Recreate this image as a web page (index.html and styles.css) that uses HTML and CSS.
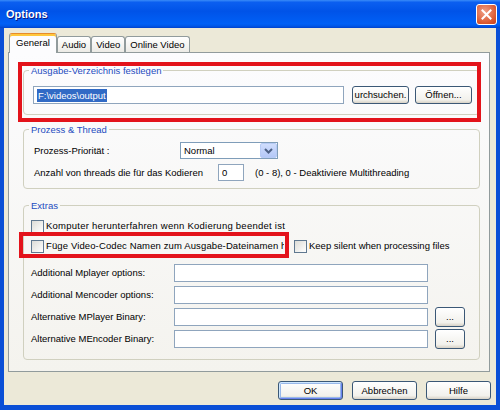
FILE: index.html
```html
<!DOCTYPE html>
<html>
<head>
<meta charset="utf-8">
<title>Options</title>
<link rel="stylesheet" href="styles.css">
</head>
<body>
<div class="window">
  <div class="titlebar">
    <span class="title">Options</span>
    <span class="close"><svg width="11" height="11" viewBox="0 0 11 11"><path d="M1.5 1.5 L9.5 9.5 M9.5 1.5 L1.5 9.5" stroke="#fff" stroke-width="2" stroke-linecap="square"/></svg></span>
  </div>
  <div class="client">
    <div class="tabs">
      <div class="tab active">General</div>
      <div class="tab">Audio</div>
      <div class="tab">Video</div>
      <div class="tab">Online Video</div>
    </div>
    <div class="panel">
      <fieldset class="group g1">
        <legend>Ausgabe-Verzeichnis festlegen</legend>
        <div class="body pathrow">
          <div class="edit path"><span class="sel">F:\videos\output</span></div>
          <button class="btn b-browse">urchsuchen.</button>
          <button class="btn b-open">Öffnen...</button>
        </div>
      </fieldset>
      <fieldset class="group g2">
        <legend>Prozess &amp; Thread</legend>
        <div class="body">
          <div class="frow r-prio">
            <span class="lbl-prio">Prozess-Priorität :</span>
            <div class="combo"><span>Normal</span><span class="drop"><svg width="9" height="6" viewBox="0 0 9 6"><path d="M1 1 L4.5 4.5 L8 1" fill="none" stroke="#4D6185" stroke-width="2"/></svg></span></div>
          </div>
          <div class="frow r-threads">
            <span class="lbl-threads">Anzahl von threads die für das Kodieren</span>
            <div class="edit spin">0</div>
            <span class="hint">(0 - 8), 0 - Deaktiviere Multithreading</span>
          </div>
        </div>
      </fieldset>
      <fieldset class="group g3">
        <legend>Extras</legend>
        <div class="body">
          <div class="chk"><span class="box"></span><span class="wide">Komputer herunterfahren wenn Kodierung beendet ist</span></div>
          <div class="chkrow">
            <div class="chk clip"><span class="box"></span><span class="txt">Füge Video-Codec Namen zum Ausgabe-Dateinamen hinzu</span></div>
            <div class="chk keep"><span class="box"></span><span>Keep silent when processing files</span></div>
          </div>
          <div class="opts">
            <span>Additional Mplayer options:</span><div class="edit"></div><span></span>
            <span>Additional Mencoder options:</span><div class="edit"></div><span></span>
            <span>Alternative MPlayer Binary:</span><div class="edit"></div><button class="btn dots">...</button>
            <span>Alternative MEncoder Binary:</span><div class="edit"></div><button class="btn dots">...</button>
          </div>
        </div>
      </fieldset>
      <div class="mark m1"></div>
      <div class="mark m2"></div>
    </div>
    <div class="buttons">
      <button class="btn default">OK</button>
      <button class="btn">Abbrechen</button>
      <button class="btn">Hilfe</button>
    </div>
  </div>
</div>
</body>
</html>
```
FILE: styles.css
```css
* { box-sizing: border-box; }
html, body { margin: 0; padding: 0; }
body {
  width: 500px;
  height: 410px;
  overflow: hidden;
  font: 9.5px/1.2 "Liberation Sans", Arial, sans-serif;
  color: #000;
  background: #ECE9D8;
}
.window {
  width: 500px;
  height: 410px;
  display: flex;
  flex-direction: column;
  background: #ECE9D8;
}
.titlebar {
  height: 28px;
  flex: none;
  display: flex;
  align-items: center;
  justify-content: space-between;
  padding: 0 3px 0 6px;
  background: linear-gradient(180deg, #3a8cf8 0, #0b5ff0 8%, #0053e8 40%, #0060f6 85%, #0057e8 93%, #0042cc 100%);
}
.title {
  color: #fff;
  font: bold 11px "Liberation Sans", Arial, sans-serif;
  text-shadow: 1px 1px #0a1883;
}
.close {
  width: 21px;
  height: 21px;
  border: 1px solid #fff;
  border-radius: 3px;
  background: radial-gradient(circle at 40% 35%, #f0a086, #d9572f 70%, #c4401c);
  display: flex;
  align-items: center;
  justify-content: center;
}
.client {
  flex: 1;
  border-left: 4px solid #0a4fd6;
  border-right: 4px solid #0a4fd6;
  border-bottom: 5px solid #0a4fd6;
  padding: 5px 6px 0 4px;
  display: flex;
  flex-direction: column;
}
.tabs {
  display: flex;
  align-items: flex-end;
  height: 19px;
  padding-left: 1px;
  position: relative;
  z-index: 1;
}
.tab {
  height: 16px;
  padding: 0 4px;
  border: 1px solid #919b9c;
  border-bottom: 0;
  border-radius: 3px 3px 0 0;
  background: linear-gradient(#ffffff, #ecebe6);
  line-height: 15px;
  white-space: nowrap;
}
.tab.active {
  height: 20px;
  margin-bottom: -1px;
  padding: 0 6px;
  background: #fcfcfe;
  border-top: 1px solid #e68b2c;
  box-shadow: inset 0 2px #ffc73c;
  line-height: 18px;
}
.panel {
  position: relative;
  height: 320px;
  border: 1px solid #919b9c;
  background: linear-gradient(#fcfcfe, #f4f3ee);
  padding: 0 9px 0 14px;
}
.group {
  margin: 0;
  padding: 0;
  border: 1px solid #d0d0bf;
  border-radius: 4px;
  min-width: 0;
}
.group legend {
  margin-left: 5px;
  padding: 0 2px;
  color: #1d4cc0;
  line-height: 13px;
}
.g1 { margin-top: 11px; }
.g2 { margin-top: 8px; }
.g3 { margin-top: 10px; }
.g1 .body { padding: 9px 0 10px 9px; display: flex; }
.g2 .body { padding: 6px 0 7px 10px; }
.g3 .body { padding: 6px 0 11px 7px; }

.edit {
  background: #fff;
  border: 1px solid #8fa5bd;
  height: 18px;
}
.path {
  width: 311px;
  padding: 0 3px;
  display: flex;
  align-items: center;
}
.sel {
  background: #316ac5;
  color: #fff;
  line-height: 13px;
  padding: 0 1px;
}
.btn {
  font: inherit;
  color: #000;
  height: 18px;
  padding: 0;
  border: 1px solid #3b5876;
  border-radius: 3px;
  background: linear-gradient(#ffffff, #f2f1ec 80%, #d8d2c6);
}
.b-browse { width: 57px; margin-left: 8px; }
.b-open { width: 57px; margin-left: 6px; }

.frow { display: flex; align-items: center; }
.r-prio { height: 17px; }
.lbl-prio { width: 146px; flex: none; }
.combo {
  width: 98px;
  height: 17px;
  border: 1px solid #7f9db9;
  background: #fff;
  display: flex;
  align-items: center;
  justify-content: space-between;
  padding-left: 3px;
}
.drop {
  width: 17px;
  height: 15px;
  border: 1px solid #b7cbf5;
  border-radius: 2px;
  background: linear-gradient(#d0ddfc, #b4c8f7);
  display: flex;
  align-items: center;
  justify-content: center;
}
.r-threads { margin-top: 5px; height: 17px; }
.lbl-threads { width: 184px; flex: none; }
.spin {
  width: 26px;
  height: 17px;
  padding-left: 3px;
  display: flex;
  align-items: center;
}
.hint { margin-left: 11px; }

.chk {
  display: flex;
  align-items: center;
  gap: 2px;
  height: 16px;
  white-space: nowrap;
}
.box {
  width: 13px;
  height: 13px;
  flex: none;
  border: 1px solid #5f7890;
  background: linear-gradient(135deg, #dcdcd7, #ffffff);
}
.wide { letter-spacing: 0.25px; }
.chkrow { display: flex; margin-top: 4px; }
.chk.clip { width: 253px; overflow: hidden; flex: none; }
.chk.clip .txt { flex: none; letter-spacing: 0.12px; }
.chk.keep { margin-left: 10px; }

.opts {
  margin-top: 10px;
  display: grid;
  grid-template-columns: 136px 254px 30px;
  grid-auto-rows: 18px;
  column-gap: 7px;
  row-gap: 4px;
  align-items: center;
  white-space: nowrap;
}
.dots { width: 30px; height: 20px; align-self: center; }

.mark {
  position: absolute;
  border: 4px solid #e3131b;
}
.m1 { left: 9px; top: 9px; width: 463px; height: 60px; }
.m2 { left: 10px; top: 179px; width: 270px; height: 26px; }

.buttons {
  display: flex;
  justify-content: flex-end;
  gap: 9px;
  margin-top: 9px;
  margin-right: -1px;
}
.buttons .btn { width: 65px; height: 19px; }
.btn.default {
  box-shadow: inset 1px 1px #cee7ff, inset -1px -1px #6982ee, inset 0 0 0 2px #98b8ea;
}
```
